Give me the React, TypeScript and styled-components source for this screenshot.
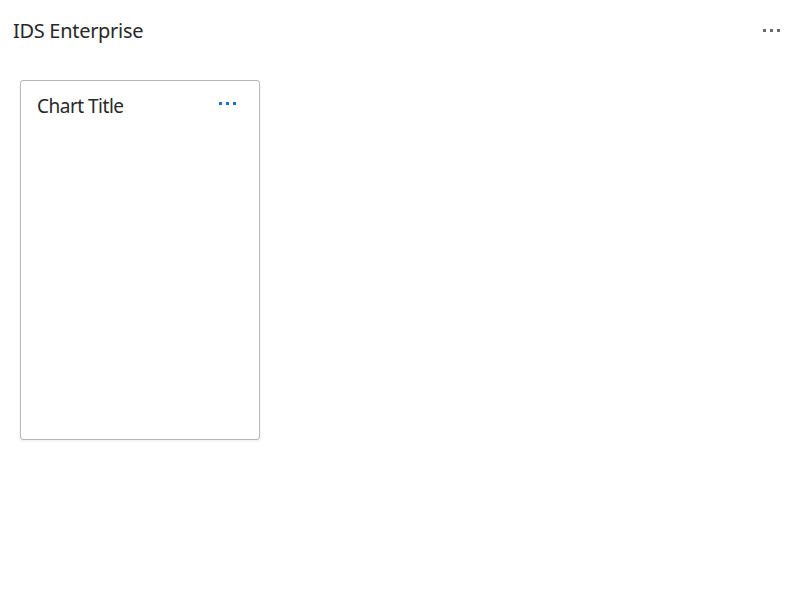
import React from "react";
import styled, { createGlobalStyle } from "styled-components";

const GlobalStyle = createGlobalStyle`
  body {
    margin: 0;
    background: #ffffff;
    font-family: "Source Sans Pro", "Noto Sans", "Open Sans", sans-serif;
    color: #28282a;
  }
`;

const Page = styled.div`
  width: 800px;
  height: 600px;
  display: flex;
  flex-direction: column;
`;

const Header = styled.div`
  display: flex;
  align-items: center;
  justify-content: space-between;
  height: 60px;
  padding: 0 20px 0 13px;
`;

const PageTitle = styled.h1`
  margin: 0;
  font-size: 20px;
  font-weight: 400;
  letter-spacing: -0.3px;
  color: #28282a;
`;

const MoreButton = styled.button<{ tone: "gray" | "blue" }>`
  display: flex;
  gap: 4px;
  padding: 0;
  border: none;
  background: transparent;
  cursor: pointer;

  span {
    width: 3px;
    height: 3px;
    background: ${(props) => (props.tone === "blue" ? "#1a6fd8" : "#6a6a6e")};
  }
`;

const Content = styled.div`
  display: flex;
  padding: 20px 20px;
`;

const Card = styled.section`
  width: 240px;
  height: 360px;
  box-sizing: border-box;
  border: 1px solid #b7b7b9;
  border-radius: 3px;
  box-shadow: 0 1px 3px rgba(0, 0, 0, 0.08);
  background: #ffffff;
`;

const CardHeader = styled.div`
  display: flex;
  align-items: center;
  justify-content: space-between;
  padding: 12px 23px 0 16px;
  height: 26px;
`;

const CardTitle = styled.h2`
  margin: 0;
  font-size: 19px;
  font-weight: 400;
  letter-spacing: -0.5px;
  color: #28282a;
`;

const CardActions = styled.div`
  margin-top: -5px;
`;

const Dots = ({ tone }: { tone: "gray" | "blue" }) => (
  <MoreButton tone={tone} aria-label="More actions">
    <span />
    <span />
    <span />
  </MoreButton>
);

const App = () => {
  return (
    <>
      <GlobalStyle />
      <Page>
        <Header>
          <PageTitle>IDS Enterprise</PageTitle>
          <Dots tone="gray" />
        </Header>
        <Content>
          <Card>
            <CardHeader>
              <CardTitle>Chart Title</CardTitle>
              <CardActions>
                <Dots tone="blue" />
              </CardActions>
            </CardHeader>
          </Card>
        </Content>
      </Page>
    </>
  );
};

export default App;
